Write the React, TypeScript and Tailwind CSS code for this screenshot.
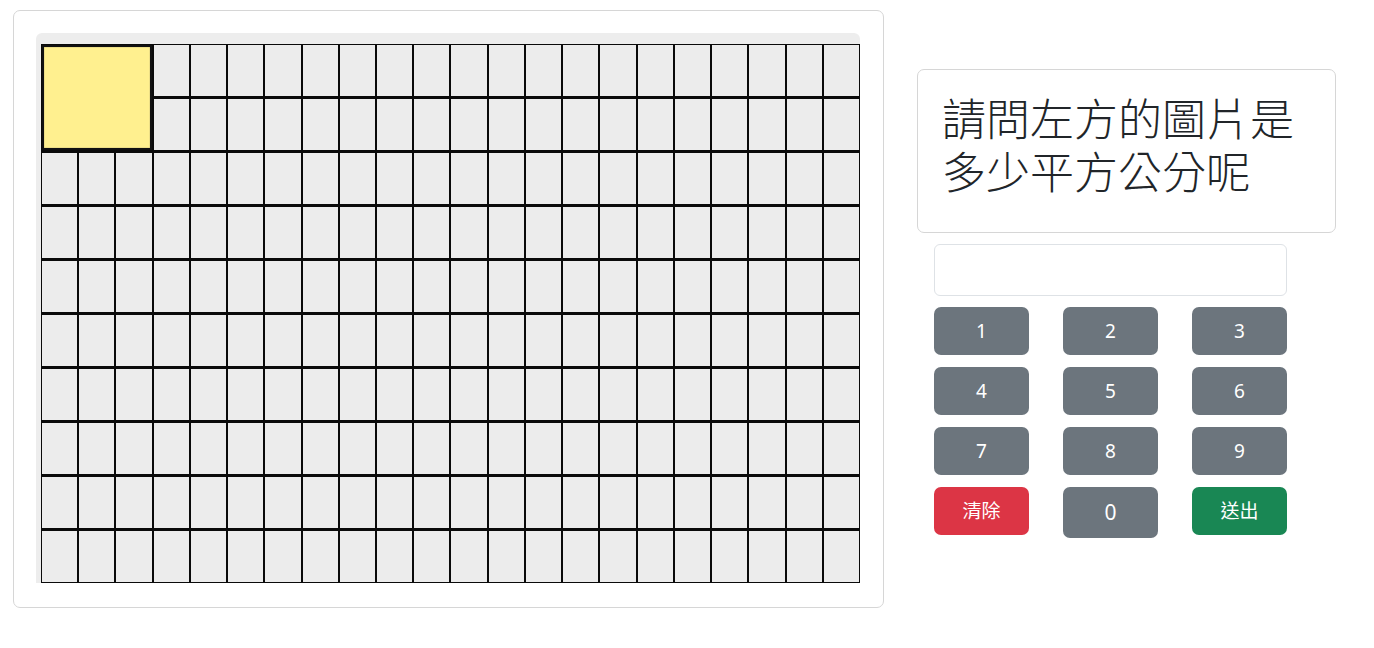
import React from "react";

const font = { fontFamily: '"Segoe UI", "Noto Sans", "Noto Sans CJK TC", sans-serif' };

function Grid() {
  const cells: React.ReactNode[] = [];
  cells.push(
    <div
      key="y"
      className="col-span-3 row-span-2 bg-[#fff08f] border-[2px] border-[#111] shadow-[inset_0_0_1px_#444]"
    />
  );
  for (let r = 0; r < 10; r++) {
    for (let c = 0; c < 22; c++) {
      if (r < 2 && c < 3) continue;
      cells.push(<div key={`${r}-${c}`} className="bg-[#ececec]" />);
    }
  }
  return (
    <div className="grid h-[539px] w-[819px] grid-cols-[repeat(22,minmax(0,1fr))] grid-rows-[repeat(10,minmax(0,1fr))] gap-x-[2px] gap-y-[3px] bg-[#0a0a0a] p-[1px]">
      {cells}
    </div>
  );
}

function Btn({
  label,
  color,
  tall,
  big,
}: {
  label: string;
  color: string;
  tall?: boolean;
  big?: boolean;
}) {
  return (
    <button
      className={`flex w-[95px] items-center justify-center rounded-[7px] text-white ${color} ${
        tall ? "h-[51px]" : "h-[48px]"
      } ${big ? "text-[21px]" : "text-[19px]"}`}
    >
      {label}
    </button>
  );
}

export default function App() {
  const gray = "bg-[#6c757d]";
  return (
    <div className="flex bg-white pl-[13px] pt-[10px] text-[#212529]" style={font}>
      <div className="h-[598px] w-[871px] rounded-[7px] border border-[#d6d6d6] p-[22px]">
        <div className="h-[550px] w-[824px] rounded-t-[6px] bg-[#ededed] pl-[5px] pt-[11px]">
          <Grid />
        </div>
      </div>
      <div className="ml-[33px] mt-[59px] w-[419px]">
        <div className="h-[164px] w-[419px] rounded-[7px] border border-[#d6d6d6] px-[24px] pt-[23px]">
          <div className="text-[44px] leading-[1.2] font-light text-[#212529]">
            請問左方的圖片是多少平方公分呢
          </div>
        </div>
        <div className="ml-[17px] mt-[11px] w-[353px]">
          <div className="h-[52px] w-[353px] rounded-[6px] border border-[#dee2e6] bg-white" />
          <div className="mt-[11px] grid grid-cols-[95px_95px_95px] justify-between gap-y-[12px]">
            <Btn label="1" color={gray} />
            <Btn label="2" color={gray} />
            <Btn label="3" color={gray} />
            <Btn label="4" color={gray} />
            <Btn label="5" color={gray} />
            <Btn label="6" color={gray} />
            <Btn label="7" color={gray} />
            <Btn label="8" color={gray} />
            <Btn label="9" color={gray} />
            <Btn label="清除" color="bg-[#dc3545]" />
            <Btn label="0" color={gray} tall big />
            <Btn label="送出" color="bg-[#198754]" />
          </div>
        </div>
      </div>
    </div>
  );
}
